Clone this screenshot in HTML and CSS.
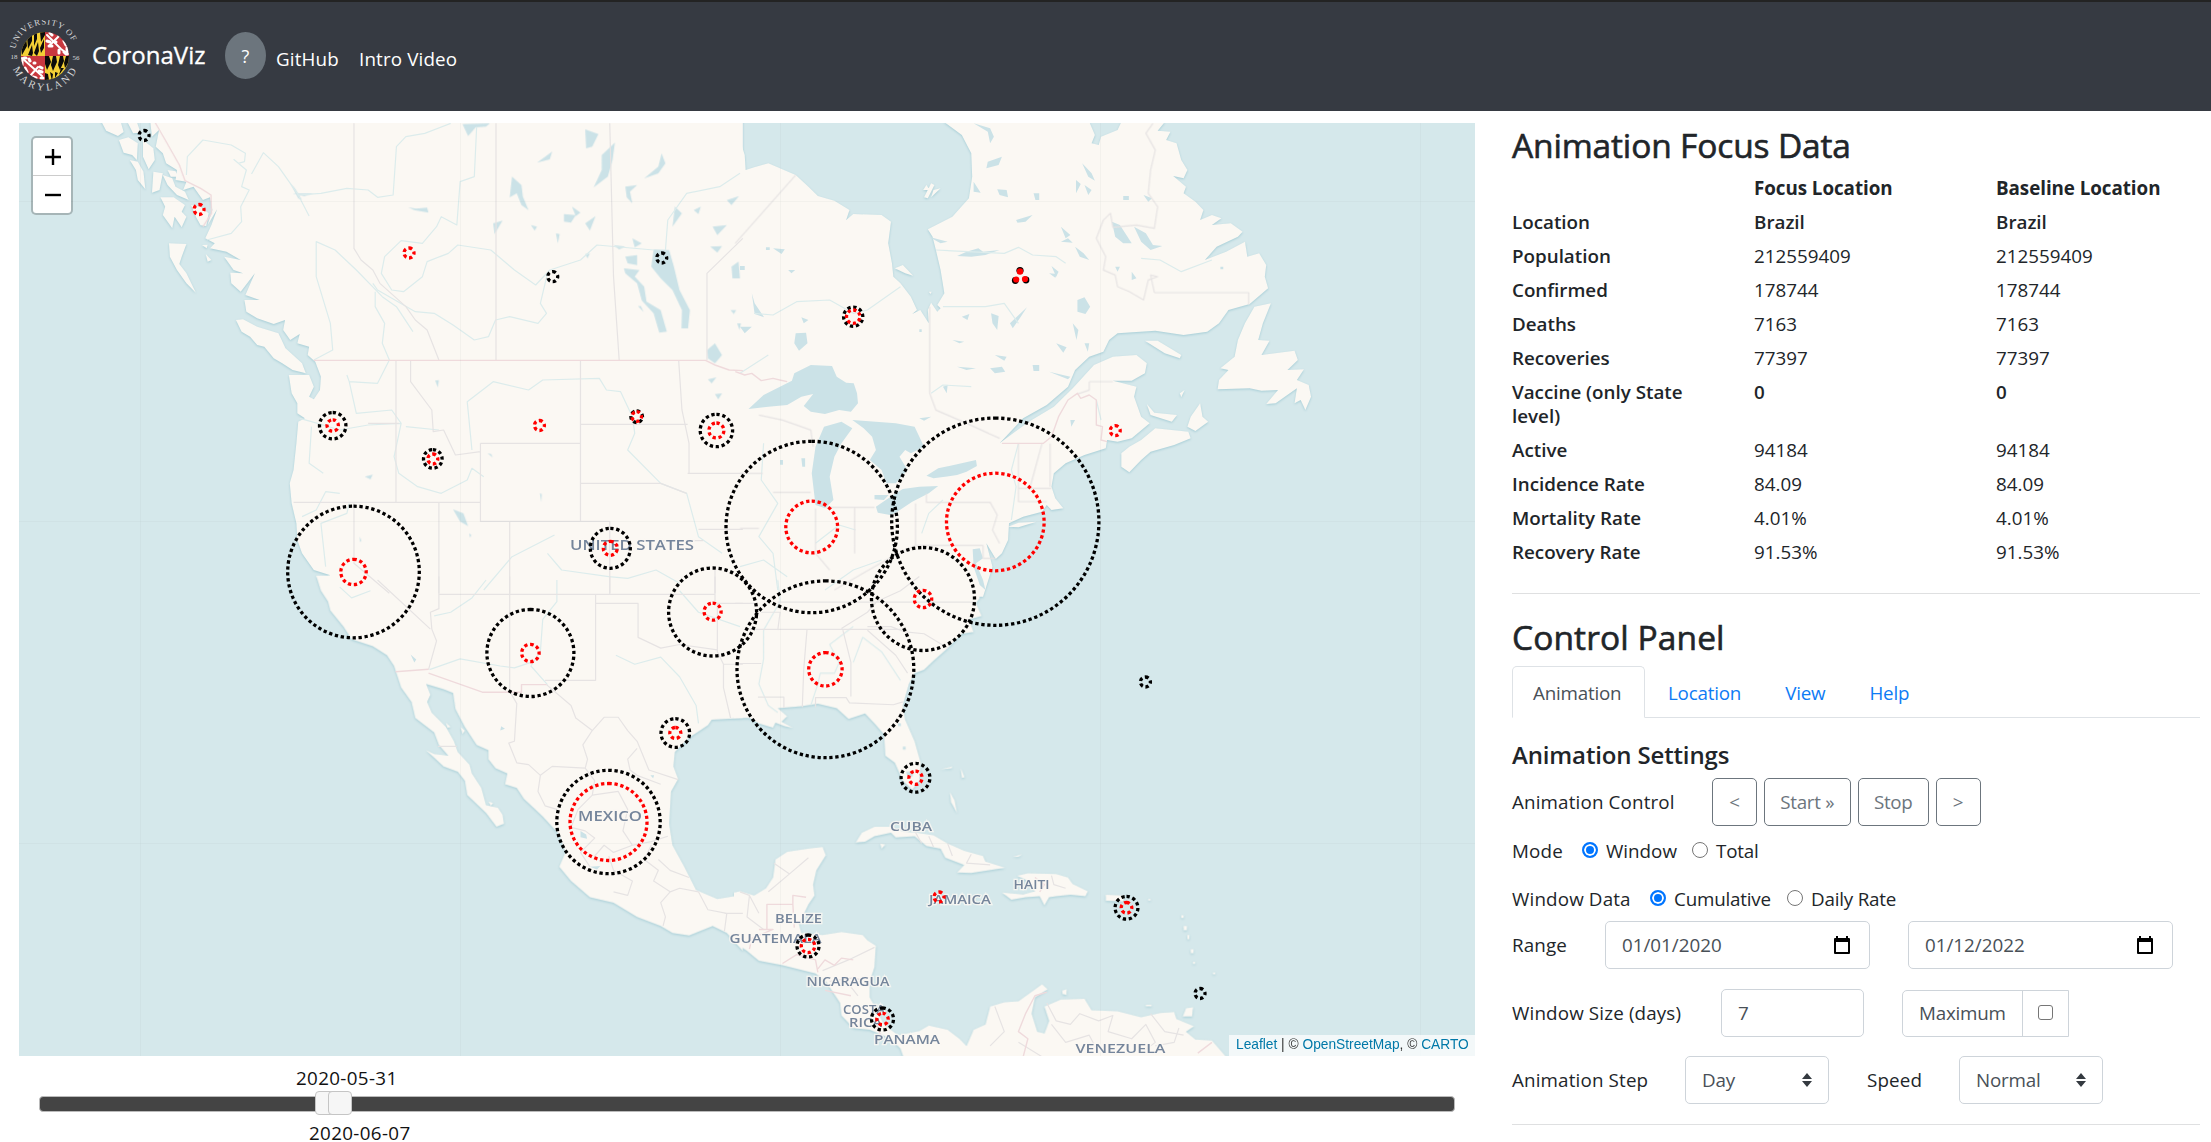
FILE: index.html
```html
<!DOCTYPE html>
<html lang="en">
<head>
<meta charset="utf-8">
<title>CoronaViz</title>
<link rel="stylesheet" href="styles.css">
</head>
<body>
<header class="navbar">
  <svg class="logo" viewBox="0 0 72 72" width="72" height="72">
    <defs>
      <clipPath id="globe"><circle cx="36" cy="36" r="24"/></clipPath>
      <path id="arc-top" d="M6.500,29 A30,30 0 0 1 65.500,29"/>
      <path id="arc-bottom" d="M4,49 A34.5,34.5 0 0 0 68,49"/>
    </defs>
    <g clip-path="url(#globe)">
      <rect x="12" y="12" width="24" height="24" fill="#f3cf35"/>
      <rect x="36" y="12" width="24" height="24" fill="#c8383f"/>
      <rect x="12" y="36" width="24" height="24" fill="#c8383f"/>
      <rect x="36" y="36" width="24" height="24" fill="#f3cf35"/>
      <path fill="#0b0b0b" d="M12,25l5-8 1,9-5,9zM18,16l5-4 0,9-4,8zM25,12l3-1 0,8-3,7zM31,12h5v3l-4,7zM19,35l4-10 1,8-1,3zM25,33l4-11 1,9-2,5zM31,28l4-9v9l-3,5z"/>
      <path fill="#0b0b0b" d="M36,36h4l2,6-4,8-2-6zM44,36h3l1,6-4,9-2-6zM51,36h3l1,5-4,9-2-5zM57,36h4l-1,6-4,6-1-5zM36,53l3,1 1,6h-4zM41,52l3,2-1,7zM46,52l3,1-3,5zM52,48l3,0-5,7z"/>
      <g fill="none" stroke="#fff" stroke-linecap="round">
        <path stroke-width="2" d="M38,15l14,14 7,5M41,25l9-9"/>
        <path stroke-width="3" d="M38,21l3,1M41,13l2,2M40,26h3M49,14l3,2M55,21l2,4M58,28v6M50,30v3M55,32l2,2M46,22l1,0"/>
        <path stroke-width="2" d="M13,38l10,9 10,9M21,56l8-9"/>
        <path stroke-width="3" d="M13,39v6M16,48l2,4M20,39l1,2M15,38h2M25,43h1M31,47l2,1M30,51l3,1M24,57l3,1M32,58h2"/>
      </g>
    </g>
    <g class="logo-text">
      <text><textPath href="#arc-top" textLength="75">UNIVERSITY OF</textPath></text>
      <text class="logo-state"><textPath href="#arc-bottom" textLength="80">MARYLAND</textPath></text>
      <text x="1.500" y="39" class="logo-year">18</text>
      <text x="63.500" y="40" class="logo-year">56</text>
    </g>
  </svg>
  <span class="brand">CoronaViz</span>
  <button class="help-button">?</button>
  <a class="nav-link">GitHub</a>
  <a class="nav-link nav-video">Intro Video</a>
</header>

<main class="page">
<section class="map-column">
<div class="map">
<svg class="map-canvas" viewBox="19 123 1456 933" width="1456" height="933">
  <g class="land">
    <g transform="translate(0 110) scale(.47194 .33333)">
      <path d="M318,30L322,80 337,60 330,110 345,130 352,160 375,180 372,210 395,215 388,240 410,230 430,270 445,262 450,300 440,345 460,298 448,345 435,385 455,400 445,415 480,425 510,450 475,440 495,480 515,490 488,488 490,520 510,545 540,490 520,555 550,570 518,570 522,605 545,625 580,642 604,630 600,660 615,690 635,672 630,700 655,710 652,735 668,755 680,800 678,840 665,868 655,860 665,830 655,795 612,795 618,850 630,880 630,910 646,925 632,935 628,1000 622,1080 614,1120 618,1180 628,1240 630,1290 640,1330 665,1380 700,1396 682,1402 690,1450H1574V30Z"/>
      <path d="M500,630L515,628 545,650 590,670 605,715 640,760 648,790 620,780 598,760 580,745 560,710 545,705 530,680 512,665ZM358,400L395,402 385,440 380,462 395,490 415,548 395,520 375,480 360,440ZM213,30L225,62 250,78 262,66 256,36ZM270,36L282,70 298,68 290,36ZM252,90L272,82 292,100 290,150 280,135 262,128ZM275,150L292,155 304,185 308,238 292,210 288,180ZM303,90L325,115 328,150 315,178 303,140ZM325,185L345,190 338,240 322,248ZM345,195L365,205 372,230 392,245 400,270 375,255 355,225ZM340,262L368,262 392,285 385,305 395,320 385,352 370,320 365,355 345,315 350,290ZM405,285L425,290 442,310 437,348 425,346 415,320ZM355,180L372,184 378,200 362,200ZM428,405L440,404 438,415ZM436,432L448,450 440,455Z"/>
    </g>
    <g transform="translate(740 110) scale(.47194 .33333)">
      <path d="M-12,30H-6L0,90 10,135 12,180 30,172 60,160 118,195 145,230 165,258 200,272 232,300 225,330 240,312 300,315 320,335 314,400 322,460 325,500 340,520 362,560 375,600 365,612 382,600 400,640 398,600 405,578 418,605 425,595 418,585 433,550 425,480 415,420 408,380 398,358 450,320 485,265 492,200 490,130 470,75 432,35H740L752,75 745,100 760,105 765,80 800,60 808,36H900L885,62 912,65 903,90 925,100 935,150 948,180 940,205 918,198 945,230 940,250 965,275 982,300 975,330 1000,315 1020,325 1000,345 1040,340 1065,365 1055,380 1010,410 985,450 1030,425 1070,395 1075,440 1100,430 1115,465 1112,500 1119,535 1080,582 1035,600 1015,640 990,665 940,675 880,662 800,670 782,690 770,725 740,740 710,780 695,830 650,885 600,925 550,1000 580,968 612,935 665,890 705,835 750,765 790,740 840,735 862,760 858,790 830,812 790,812 840,830 835,860 850,920 868,940 830,985 800,995 778,990 775,1015 730,1035 690,1060 665,1090 660,1130 668,1165 685,1195 660,1200 650,1185 640,1205 600,1220 570,1240 568,1290 555,1330 542,1347 522,1300 535,1370 515,1460H-12Z"/>
      <path d="M1090,590L1125,580 1108,640 1098,690 1122,692 1105,735 1175,722 1182,750 1160,780 1195,778 1180,810 1205,825 1210,860 1198,900 1188,870 1175,880 1180,835 1135,880 1115,882 1140,840 1105,842 1080,835 1012,838 1015,810 1035,780 1018,775 1048,740 1055,690 1070,640ZM858,692L885,692 935,735 932,745 900,730ZM850,990L880,955 950,965 955,985 920,1005 870,1025 850,1050 825,1087 808,1070 808,1030 825,1010ZM975,880L980,920 992,935 965,963 948,950 955,920ZM862,882L878,908 926,915 915,935 870,915ZM328,475L345,465 367,497 350,490ZM405,220L412,225 398,265 390,262ZM568,1250L590,1238 628,1235 590,1252ZM400,545L406,545 404,552ZM395,225L402,240 388,240ZM410,240L425,235 405,262ZM932,850L942,840 935,862Z"/>
    </g>
    <g transform="translate(0 580) scale(.47194 .35842)">
      <path d="M670,-12L680,30 695,60 700,85 728,130 745,165 790,185 820,210 835,240 850,300 872,340 880,385 920,425 930,460 950,490 920,485 903,475 940,520 970,535 985,560 990,600 1030,650 1052,688 1068,680 1065,655 1055,635 1030,628 1020,580 1000,540 995,515 970,480 962,450 945,410 915,370 905,340 912,320 903,290 940,305 960,315 965,360 985,410 1010,460 1035,475 1035,500 1050,525 1075,540 1070,570 1095,580 1110,610 1150,660 1185,710 1198,760 1185,800 1210,840 1250,885 1300,900 1350,940 1400,965 1425,985 1460,992 1510,965 1540,985 1574,1035V878L1520,890 1475,865 1450,800 1425,740 1418,680 1422,590 1437,555 1427,520 1430,480 1460,440 1500,405 1508,390 1574,385V-12Z"/>
      <path d="M976,410L985,420 980,430ZM1035,618L1045,622 1040,630ZM945,398L955,410 948,412Z"/>
    </g>
    <g transform="translate(740 580) scale(.47194 .35842)">
      <path d="M-12,-12H516L500,20 508,50 500,65 512,100 485,110 495,145 470,150 440,190 410,225 390,250 370,260 358,290 345,350 350,390 370,450 383,510 380,560 365,585 345,560 328,510 308,490 305,430 285,400 265,372 230,388 205,358 165,345 130,352 80,358 100,380 88,395 112,412 95,408 75,398 70,412 40,400 20,385 -12,385Z"/>
      <path d="M-12,872L0,868 30,880 55,860 70,830 75,780 100,758 150,748 175,745 182,768 162,810 155,850 158,880 145,905 125,960 130,985 175,990 215,982 260,990 270,1005 288,1020 285,1080 275,1120 275,1165 290,1200 305,1240 335,1270 380,1258 400,1243 440,1255 465,1280 480,1300 495,1255 520,1240 530,1190 560,1178 590,1175 640,1128 652,1142 625,1165 618,1210 630,1260 645,1265 655,1230 645,1190 680,1170 730,1168 745,1200 800,1203 850,1220 890,1208 920,1205 925,1225 962,1245 945,1260 965,1282 1000,1285 1040,1345H350L340,1308 320,1280 275,1255 240,1250 215,1215 212,1180 182,1120 160,1098 90,1075 40,1062 15,1035 -12,1010Z"/>
      <path d="M245,732L258,705 285,688 320,688 345,702 375,705 410,712 440,735 475,755 515,770 520,785 562,803 490,817 460,816 475,795 435,775 425,750 395,742 370,715 330,718 320,705 285,715 265,730ZM555,872L600,877 625,868 610,840 587,825 610,818 670,820 695,830 705,848 737,868 732,882 700,878 670,882 655,885 645,908 635,882 605,885 575,892ZM775,878L815,880 812,897 775,895ZM297,735L308,738 300,750ZM425,528L450,520 448,525ZM468,525L476,550 470,552ZM445,592L455,615 460,650 447,620ZM578,772L598,765 590,772ZM945,1195L960,1192 958,1218 938,1218ZM683,1145L692,1142 692,1158 683,1155ZM935,935h5v8h-5zM940,965h7v12h-7zM948,990h4v12h-4zM955,1030h6v11h-6zM960,1065h4v6h-4zM1002,1095h5v5h-5zM860,1185h12v4h-12zM865,890h5v4h-5z"/>
    </g>
  </g>

  <g class="lakes">
    <g transform="translate(0 110) scale(.47194 .33333)">
      <path d="M1385,418L1418,420 1428,470 1440,540 1462,600 1458,655 1444,655 1445,600 1425,540 1400,505 1380,470ZM1322,475L1355,480 1345,500 1365,530 1370,575 1400,600 1413,665 1397,668 1385,610 1360,572 1350,520 1325,490ZM1275,135L1303,98 1298,150 1288,200 1258,232 1275,180ZM1240,58L1268,72 1255,110 1242,115ZM980,42L1038,40 1030,50 1008,52 992,78ZM1138,158L1170,125 1165,148ZM1085,200L1105,225 1108,260 1120,300 1105,285 1095,250 1080,262ZM1365,205L1395,170 1402,130 1410,160 1395,190ZM865,292L882,296 905,293 908,308 890,303 878,300ZM1498,720L1515,700 1530,735 1515,760 1500,745ZM960,1198L982,1210 992,1248 975,1235ZM1195,312L1220,315 1210,338 1195,335ZM1125,345L1138,350 1133,362ZM1045,340L1065,332 1048,372ZM1325,230L1350,225 1335,245 1340,280 1328,262ZM1212,290L1230,308 1220,318ZM1240,340L1262,318 1250,362ZM1178,370L1186,372 1182,400ZM1470,300L1485,290 1480,312ZM1510,350L1540,345 1520,375ZM1505,410L1530,408 1520,428ZM1550,470L1565,455 1568,505 1552,505ZM1540,270L1566,258 1550,285ZM1340,385L1360,400 1345,412ZM1325,440L1350,435 1350,465 1330,460ZM1300,405L1325,410 1312,418ZM1240,432L1250,430 1245,445ZM1430,290L1445,310 1425,350ZM922,812L930,810 928,832ZM773,1100L790,1094 785,1108ZM1500,808L1518,802 1508,820ZM1515,852L1530,850 1522,868ZM1548,600h12l-5,12zM1562,640h8l-3,20zM1352,588l6,0 6,18zM1033,1030l8,2 3,10zM1144,1150l4,2-1,25zM762,1280l4,12-3,5zM994,1270l5,5-3,8zM620,250l45,0-20,8zM615,220l10,15 15,35-8-5z"/>
    </g>
    <g transform="translate(740 110) scale(.47194 .33333)">
      <path d="M18,897L50,855 110,812 115,790 150,765 195,768 205,800 225,818 241,820 248,850 250,880 235,905 210,900 180,912 150,905 135,888 155,852 130,860 100,885 60,890ZM160,1010L178,950 215,935 238,955 215,1000 200,1040 190,1100 198,1170 180,1195 160,1185 152,1090ZM238,930L330,940 370,950 380,980 390,1010 362,1030 350,1020 338,1040 355,1080 330,1120 310,1120 300,1080 275,1050 288,1020 280,980 262,955ZM288,1190L330,1150 345,1137 380,1130 420,1128 400,1150 365,1175 330,1208 318,1215 292,1208ZM395,1097L420,1075 500,1050 502,1068 480,1085 460,1095 410,1105ZM493,1318L508,1315 515,1345 500,1360 515,1410 520,1440 508,1425 495,1370ZM285,1155L315,1155 305,1170 285,1168Z"/>
      <path d="M495,40L530,55 538,80 530,100 525,65ZM525,155L555,140 548,165 522,175ZM725,160L745,190 752,212 738,200ZM712,210L722,222 712,250ZM730,225L745,240 738,255ZM545,238L565,240 568,262 550,255ZM495,215L510,248 495,245ZM622,250h12v20h-8zM585,330L620,315 605,335 588,338ZM480,425L505,415 515,425 550,420 520,435 490,440 460,438ZM680,350L700,375 690,385ZM710,410L728,430 740,450 720,440ZM680,395L695,385 705,398ZM788,335L805,345 830,400 812,400 795,380ZM835,350L860,370 875,405 895,408 870,420 850,395ZM572,640L608,592 595,620 578,655ZM715,570L730,562 742,590 732,612 715,605ZM450,690L475,695 465,700ZM470,620L486,612 482,630ZM532,610L548,618 545,660 535,640ZM660,468L675,485 670,500ZM655,490L672,492 668,503ZM540,735L565,740 560,752ZM670,700L692,712 685,728ZM620,765h14v18h-12zM530,775L555,770 562,785 540,790ZM118,670L140,668 143,700 125,722 115,700ZM70,415L95,418 88,432ZM55,412h8v8h-8zM102,480l15,0-8,10zM0,468h10v12h-10zM0,650h25l-15,20zM25,550l6,30 20,42-20-10zM130,622l15,8-10,10zM380,925L405,920 390,932ZM380,658h5v8h-5zM460,770L500,775 480,780ZM430,830L440,825 438,850ZM400,380L440,395 425,400ZM795,470l10,0-5,15zM830,485l10,20-10,5zM730,700h10l-3,25zM705,640l12,20-4,30zM812,258h12v12h-12zM855,255l18,10-8,10zM1018,470h6v8h-6zM130,1045h8v25h-6zM85,1050h6v14h-6zM700,930l10,0-8,20zM655,785l45,15-5,8z"/>
    </g>
    <g transform="translate(0 580) scale(.47194 .35842)">
      <path d="M870,208L882,222 878,230ZM1062,408L1070,415 1060,420ZM1250,800L1272,798 1265,808ZM1230,700l12,10 2,12-14-4zM1378,545l8,0-2,8z"/>
    </g>
    <g transform="translate(740 580) scale(.47194 .35842)">
      <path d="M335,400h6v8h-6zM345,465h6v8h-6zM352,535L368,535 365,550 355,548Z"/>
    </g>
  </g>

  <g class="rivers">
    <g transform="translate(0 110) scale(.47194 .33333)">
      <path d="M395,195L397,140 430,90 490,105 520,130 518,155 505,160M495,148L522,180 512,230 528,240 510,290 512,335 490,370 438,390M533,192L558,128 590,170 630,250 655,318M630,255L680,250 735,235 780,240 800,262 833,255 840,110 860,80 900,70 955,40M1010,50L1005,200 975,215 968,345 935,320 925,350 895,400 850,392 815,440 808,490 830,540 855,545 895,500 905,455 950,430 970,405 1040,420 1090,480 1135,525 1165,480 1230,450 1265,405 1385,420M1160,490L1145,580 1158,610 1140,640 1080,620 1050,630 1035,680 1005,690 960,645 920,610 880,605 800,540 790,520M665,750L705,720 700,640 670,500 670,395 710,420 755,480 810,560 840,590 875,665M795,545L795,590 815,640 810,700 825,750 800,820 740,815 735,795M1410,420L1415,330 1455,250 1525,230 1568,190M740,815L755,910 830,900 850,940 780,945 720,960 660,935 635,925M850,940L835,1040 845,1090 885,1130 935,1150 990,1110 1000,1075 1025,1100M1000,1020L990,875 1045,815 1120,840 1150,810 1270,805 1285,840 1315,845 1340,920 1345,970 1330,1020 1400,1120 1455,1150 1480,1280 1530,1330M860,950L930,960 M640,1220L670,1200 690,1145 720,1150M740,1180L735,1210 680,1240 690,1370M660,950L655,1060 685,1090M1025,1440L1085,1340 1175,1275M1160,1330L1190,1380 1290,1400 1330,1405 1390,1380 1440,1420"/>
    </g>
    <g transform="translate(740 110) scale(.47194 .33333)">
      <path d="M415,420L560,430 590,412 620,435 670,440 690,460M30,610L70,615 120,575 190,570 240,610 270,600 340,530M430,590L520,590 560,580 590,640M850,445L890,450 935,485 1000,450M0,790L60,735M50,1000L45,1110 80,1180 40,1280 70,1330 80,1440M160,1300L210,1245 245,1260M385,1270L400,1210 430,1170M590,1000L575,1080 585,1130 575,1230M0,1370L50,1350 100,1400M405,850L430,825 490,830M755,870L765,930M180,1440L240,1380 300,1350"/>
    </g>
    <g transform="translate(0 580) scale(.47194 .35842)">
      <path d="M1180,0L1180,60 1150,110 1145,200 1125,240 1160,292M1030,0L1000,50 955,90 920,100M910,250L975,220 1060,240 1090,245 1125,230M1305,210L1345,235 1400,215 1440,270 1475,350 1480,400M1440,30L1480,90 1568,130M720,20L745,50 785,30"/>
    </g>
    <g transform="translate(740 580) scale(.47194 .35842)">
      <path d="M80,0L85,60 50,140 50,220 40,290 60,350 80,370M150,350L165,290 170,260 200,260 210,230 190,180 240,130M240,230L260,160 300,200 340,280"/>
    </g>
  </g>

  <g class="borders">
    <g transform="translate(0 110) scale(.47194 .33333)">
      <path d="M750,40V415L765,450 790,480 805,520 860,590 880,630 905,660 930,750M1051,40V750M1292,40L1300,500 1312,750M1498,750V490L1574,385M839,750V1177M870,750V815L915,900 918,965 940,960 965,1035 1018,1025M1018,1000V1234H1292M1018,1000H1230M1230,750V1234M1230,943H1457M1438,750L1445,900 1460,1000V1090M1457,1090H1574M1230,1120H1400L1455,1150M1480,1258H1574M622,1177H1018M930,1177V1450M1080,1234V1450M1292,1234V1450M750,1180V1360L825,1450M780,940H845M1515,1380V1450M1490,1292H1400"/>
    </g>
    <g transform="translate(740 110) scale(.47194 .33333)">
      <path d="M118,195L-10,400M402,590V850L415,900 480,940 550,985M878,548H1078V585M875,40L860,70 880,120 870,180 865,250 885,290 878,355 840,345 790,352 785,310 770,330 755,385 775,440 770,480 795,495 800,530 825,545 855,570 865,510 885,500 870,495 878,548M395,1150V1177H530L545,1215 535,1260 550,1300M372,1180V1306H515M243,1190V1330M160,1195V1330L190,1380M70,1147H150M180,1192H285M657,1000V1130M640,1000L615,1130M590,1000V1175H650M590,1135H660M0,1255H40M40,915L90,930 150,960 155,1010M740,815H790M740,815V840L715,852M0,1090H48M200,1440L260,1390 310,1350 372,1306M515,1306V1345H540"/>
    </g>
    <g transform="translate(0 580) scale(.47194 .35842)">
      <path d="M930,-10V80L912,90 915,137 925,170 908,250M930,40H1515M1080,-10V310M1292,-10V40M1262,40V280H1155M1262,65H1352V160L1400,190 1440,180 1520,195M1515,-10V65H1574M1520,65V200L1533,235V300L1548,385M1533,235H1574M800,0L912,137M1158,292L1210,350 1220,385 1255,420 1280,383 1310,383 1330,420 1350,450 1375,530 1437,557M928,464H968M1082,315L1095,345 1090,450 1078,455 1095,510 1120,515 1145,545 1170,520 1240,525 1245,500 1235,460 1255,420M1145,545L1140,590 1155,630 1180,640M1350,470L1330,500 1335,530 1350,545 1400,570M1240,525L1260,560 1255,600 1225,640 1210,690 1240,700 1260,720 1230,760 1250,800M1255,600L1310,590 1330,640 1320,700 1340,740 1300,760 1280,740 1260,770M1340,740L1380,730 1415,715M1380,740L1365,780 1395,810 1385,840 1420,870 1400,900 1410,940 1405,965M1395,780L1420,810 1460,830M1300,870L1330,880 1340,840 1300,810 1290,770M1420,870L1440,860 1480,870 1500,920 1540,930 1535,980M1535,930H1574"/>
    </g>
    <g transform="translate(740 580) scale(.47194 .35842)">
      <path d="M-10,65H30M80,62H500M20,138H340M80,140L85,90H45M142,138L135,250 132,355M218,140L235,230V325M160,355V328H225L232,343 325,348 345,340M38,327H93V357M-10,233H45M270,130L320,130 350,145 390,150 440,190M270,140L330,210 355,260M215,135L270,90 290,60 340,30 380,-10M72,790L105,820 145,775M105,820L60,870M0,870L20,880 40,930M20,880L15,940 50,975M175,1090L230,1060 285,1025M190,1120L240,1110 270,1120M220,1110L250,1160M370,700L385,735M400,715L410,745M440,735L450,770M490,765L480,790 530,795M660,825L665,850 690,860M650,1180L670,1230 700,1240 720,1210 760,1230 790,1215 780,1260 830,1280 860,1240 880,1290 850,1320M870,1210L900,1260 940,1270M540,1190L560,1260 530,1300M660,1240L690,1290 740,1270 760,1320M590,1290L640,1330 M930,1250L920,1290 880,1300"/>
    </g>
  </g>

  <g class="nations">
    <g transform="translate(0 110) scale(.47194 .33333)">
      <path d="M328,36L350,90 380,165 385,185 392,212 425,235 447,255 448,310 430,350M665,751H1495L1515,765 1545,780 1574,782"/>
    </g>
    <g transform="translate(740 110) scale(.47194 .33333)">
      <path d="M-10,785L10,795 25,790 45,812 70,805 100,815M555,1000H643L660,980 675,920 695,870 715,850 722,865 740,855 755,870V945L768,950 765,990 778,995"/>
    </g>
    <g transform="translate(0 580) scale(.47194 .35842)">
      <path d="M838,256L908,249M908,260L1022,313H1105V292H1158"/>
    </g>
    <g transform="translate(740 580) scale(.47194 .35842)">
      <path d="M20,1030L25,1000 70,975 40,975M57,975V905H112V880L140,885M112,905L115,970M90,1070L120,1045 160,1060 165,1095M165,1085L180,1060 200,1075 215,1055 240,1060M635,870L645,850 625,830M600,1330L610,1280 590,1260 605,1210 625,1160 650,1150M180,1145L235,1160M290,1240L300,1280M970,1320L1000,1290"/>
    </g>
  </g>

  <path class="graticule" d="M140.500,123V1056M460.500,123V1056M780.500,123V1056M1100.500,123V1056M1420.500,123V1056M19,201.500H1475M19,521.500H1475M19,843.500H1475"/>

  <g class="labels">
    <text x="570" y="550" textLength="124" lengthAdjust="spacingAndGlyphs">UNITED STATES</text>
    <text x="578" y="821" textLength="64" lengthAdjust="spacingAndGlyphs">MEXICO</text>
    <g class="labels-small">
      <text x="890" y="831" textLength="42" lengthAdjust="spacingAndGlyphs">CUBA</text>
      <text x="1013.500" y="889" textLength="36" lengthAdjust="spacingAndGlyphs">HAITI</text>
      <text x="929" y="904" textLength="62" lengthAdjust="spacingAndGlyphs">JAMAICA</text>
      <text x="775" y="923" textLength="47" lengthAdjust="spacingAndGlyphs">BELIZE</text>
      <text x="729.500" y="943" textLength="92" lengthAdjust="spacingAndGlyphs">GUATEMALA</text>
      <text x="806.500" y="986" textLength="83" lengthAdjust="spacingAndGlyphs">NICARAGUA</text>
      <text x="843" y="1013.500" textLength="42" lengthAdjust="spacingAndGlyphs">COSTA</text>
      <text x="849" y="1026.500" textLength="33" lengthAdjust="spacingAndGlyphs">RICA</text>
      <text x="874" y="1044" textLength="66" lengthAdjust="spacingAndGlyphs">PANAMA</text>
      <text x="1075.500" y="1053" textLength="90" lengthAdjust="spacingAndGlyphs">VENEZUELA</text>
    </g>
  </g>

  <g class="rings">
    <circle cx="144" cy="135.500" r="5"/>
    <circle cx="552.700" cy="276.700" r="5"/>
    <circle cx="661.700" cy="258" r="5"/>
    <circle cx="332.700" cy="425.700" r="13.200"/>
    <circle cx="432.800" cy="458.900" r="9.300"/>
    <circle cx="636.700" cy="416.700" r="5.800"/>
    <circle cx="716.400" cy="430.500" r="16.200"/>
    <circle cx="610.300" cy="548.300" r="20"/>
    <circle cx="353.500" cy="572" r="65.800"/>
    <circle cx="853.200" cy="316.700" r="9.600"/>
    <circle cx="811.700" cy="527" r="85.700"/>
    <circle cx="995.300" cy="521.700" r="103.600"/>
    <circle cx="923" cy="599" r="51.500"/>
    <circle cx="825.400" cy="669.300" r="88.400"/>
    <circle cx="712.600" cy="612" r="44"/>
    <circle cx="530.400" cy="653" r="43.500"/>
    <circle cx="675.300" cy="733" r="14.300"/>
    <circle cx="608.500" cy="822" r="51.700"/>
    <circle cx="915.500" cy="777.800" r="14.400"/>
    <circle cx="1145.400" cy="682" r="5"/>
    <circle cx="1126.500" cy="907.800" r="11.400"/>
    <circle cx="808" cy="946" r="11"/>
    <circle cx="882.500" cy="1019" r="11"/>
    <circle cx="1200" cy="993.500" r="5"/>
  </g>
  <g class="rings rings-deaths">
    <circle cx="199" cy="209.500" r="5"/>
    <circle cx="409" cy="253" r="5"/>
    <circle cx="332.700" cy="425.500" r="5.700"/>
    <circle cx="432.800" cy="459" r="5"/>
    <circle cx="539.400" cy="425.500" r="5"/>
    <circle cx="636.700" cy="416.500" r="4.800"/>
    <circle cx="716.400" cy="430.500" r="7.500"/>
    <circle cx="610.300" cy="548.300" r="7"/>
    <circle cx="353.500" cy="572" r="12.700"/>
    <circle cx="853.200" cy="316.700" r="6.700"/>
    <circle cx="1115.200" cy="430.700" r="5"/>
    <circle cx="811.700" cy="527" r="25.900"/>
    <circle cx="995.300" cy="522" r="48.800"/>
    <circle cx="923" cy="599" r="8.700"/>
    <circle cx="825.400" cy="669.300" r="16.700"/>
    <circle cx="712.600" cy="611.700" r="8.500"/>
    <circle cx="530.400" cy="653" r="8.700"/>
    <circle cx="675.300" cy="733" r="5.500"/>
    <circle cx="608.500" cy="822" r="38.500"/>
    <circle cx="915.500" cy="777.800" r="6.600"/>
    <circle cx="939" cy="897" r="5"/>
    <circle cx="1126.500" cy="907.800" r="5.300"/>
    <circle cx="808" cy="946" r="6.700"/>
    <circle cx="882.500" cy="1019" r="5.700"/>
  </g>
  <g><circle cx="1020" cy="270.500" r="3.600"/><circle cx="1015.300" cy="280.500" r="3.400"/><circle cx="1026" cy="280" r="3.400"/></g>
  <g fill="#f00"><circle cx="1020" cy="271.500" r="3.200"/><circle cx="1016.200" cy="279.500" r="3.100"/><circle cx="1025" cy="279" r="3.100"/></g>
</svg>
<div class="zoom-control"><a><svg width="16" height="16" viewBox="0 0 16 16"><path d="M0 8H16M8 0V16"/></svg></a><a><svg width="16" height="16" viewBox="0 0 16 16"><path d="M0 8H16"/></svg></a></div>
<div class="attribution"><a>Leaflet</a> | © <a>OpenStreetMap</a>, © <a>CARTO</a></div>
</div>
<div class="timeline">
  <span class="date date-from">2020-05-31</span>
  <div class="track"><i class="handle handle-from"></i><i class="handle handle-to"></i></div>
  <span class="date date-to">2020-06-07</span>
</div>
</section>

<section class="side">
  <h2 class="title title-focus">Animation Focus Data</h2>
  <div class="focus-table">
    <span></span><b>Focus Location</b><b>Baseline Location</b>
    <span class="key">Location</span><span class="key">Brazil</span><span class="key">Brazil</span>
    <span class="key">Population</span><span>212559409</span><span>212559409</span>
    <span class="key">Confirmed</span><span>178744</span><span>178744</span>
    <span class="key">Deaths</span><span>7163</span><span>7163</span>
    <span class="key">Recoveries</span><span>77397</span><span>77397</span>
    <span class="key">Vaccine (only State<br>level)</span><span class="key">0</span><span class="key">0</span>
    <span class="key">Active</span><span>94184</span><span>94184</span>
    <span class="key">Incidence Rate</span><span>84.09</span><span>84.09</span>
    <span class="key">Mortality Rate</span><span>4.01%</span><span>4.01%</span>
    <span class="key">Recovery Rate</span><span>91.53%</span><span>91.53%</span>
  </div>
  <hr class="rule">
  <h2 class="title title-panel">Control Panel</h2>
  <nav class="tabs"><a class="tab tab-active">Animation</a><a class="tab">Location</a><a class="tab">View</a><a class="tab">Help</a></nav>
  <h4 class="subtitle">Animation Settings</h4>
  <div class="row row-control">
    <span class="label w-control">Animation Control</span>
    <button class="btn btn-step">&lt;</button><button class="btn btn-start">Start »</button><button class="btn btn-stop">Stop</button><button class="btn btn-step">&gt;</button>
  </div>
  <div class="row row-mode">
    <span class="label w-mode">Mode</span><i class="radio on"></i><span class="w-window">Window</span><i class="radio"></i><span>Total</span>
  </div>
  <div class="row row-data">
    <span class="label w-data">Window Data</span><i class="radio on"></i><span class="w-cumulative">Cumulative</span><i class="radio"></i><span>Daily Rate</span>
  </div>
  <div class="row row-range">
    <span class="label w-range">Range</span>
    <div class="field date-field">01/01/2020<svg width="16" height="18" viewBox="0 0 16 18"><path d="M2 0h2v2h8V0h2v2h1a1 1 0 0 1 1 1v14a1 1 0 0 1-1 1H1a1 1 0 0 1-1-1V3a1 1 0 0 1 1-1h1zM2 6v10h12V6z" fill-rule="evenodd"/></svg></div>
    <div class="field date-field date-end">01/12/2022<svg width="16" height="18" viewBox="0 0 16 18"><path d="M2 0h2v2h8V0h2v2h1a1 1 0 0 1 1 1v14a1 1 0 0 1-1 1H1a1 1 0 0 1-1-1V3a1 1 0 0 1 1-1h1zM2 6v10h12V6z" fill-rule="evenodd"/></svg></div>
  </div>
  <div class="row row-size">
    <span class="label w-size">Window Size (days)</span>
    <div class="field size-field">7</div>
    <div class="group"><span class="group-text">Maximum</span><span class="group-check"><i class="checkbox"></i></span></div>
  </div>
  <div class="row row-step">
    <span class="label w-step">Animation Step</span>
    <div class="field select">Day<svg width="10" height="14" viewBox="0 0 10 14"><path d="M5 0l5 6H0zM5 14L0 8h10z"/></svg></div>
    <span class="label w-speed">Speed</span>
    <div class="field select">Normal<svg width="10" height="14" viewBox="0 0 10 14"><path d="M5 0l5 6H0zM5 14L0 8h10z"/></svg></div>
  </div>
  <hr class="rule rule-end">
</section>
</main>
</body>
</html>
```
FILE: styles.css
```css
* { box-sizing: border-box; }
body {
  margin: 0;
  width: 2211px;
  height: 1142px;
  overflow: hidden;
  background: #fff;
  color: #212529;
  font: 18.8px/24px "Open Sans", "Noto Sans", sans-serif;
}
.navbar {
  display: flex;
  align-items: flex-start;
  height: 111px;
  background: #363a42;
  border-top: 2px solid #232323;
  color: #fff;
}
.logo { margin: 18px 0 0 9px; flex: none; }
.logo-text { fill: #d6d8da; font: 8.6px "Liberation Serif", serif; }
.logo-state { font-size: 10.5px; }
.logo-year { font-size: 7px; }
.brand { width: 133px; margin: 35px 0 0 11px; font-size: 24px; line-height: 36px; -webkit-text-stroke: .3px; }
.help-button {
  width: 41px;
  height: 47px;
  margin-top: 30px;
  padding: 0;
  border: 0;
  border-radius: 50%;
  background: #6c757d;
  color: #fff;
  font: 18px "Open Sans", sans-serif;
}
.nav-link { width: 62px; margin: 44px 0 0 10px; line-height: 26px; letter-spacing: .15px; white-space: nowrap; }
.nav-video { width: auto; margin-left: 21px; }

.page { display: flex; }
.map-column { width: 1456px; margin: 12px 37px 0 19px; flex: none; }
.map { position: relative; height: 933px; background: #d5e8eb; overflow: hidden; }
.map-canvas { display: block; }
.land { fill: #fbf8f3; filter: drop-shadow(0 1px 1.2px #a6cdd6); }
.lakes { fill: #cbe2e7; }
.rivers, .borders, .nations, .graticule { fill: none; }
.rivers path, .borders path, .nations path { vector-effect: non-scaling-stroke; stroke-linejoin: round; }
.rivers { stroke: #dcecec; stroke-width: 1.2; }
.borders { stroke: #e6e3e3; stroke-width: 1.2; }
.nations { stroke: #efdadc; stroke-width: 1.4; }
.graticule { stroke: #8899a0; stroke-opacity: .07; }
.labels { fill: #75859b; stroke: #fbf8f3; stroke-width: 2.5; stroke-opacity: .8; paint-order: stroke; font: 600 14px "Open Sans", sans-serif; }
.labels-small { font-size: 13px; }
.rings circle {
  fill: none;
  stroke: #000;
  stroke-width: 3.3;
  stroke-dasharray: 3.3 2.7;
  transform: rotate(-90deg);
  transform-box: fill-box;
  transform-origin: center;
}
.rings-deaths circle { stroke: #f00; }
.zoom-control {
  position: absolute;
  left: 12px;
  top: 13px;
  width: 42px;
  height: 79px;
  border: 2px solid rgba(0,0,0,.22);
  border-radius: 5px;
  background: #fff;
  background-clip: padding-box;
}
.zoom-control a {
  display: flex;
  align-items: center;
  justify-content: center;
  height: 37px;
  padding: 1px 0 0 2px;
}
.zoom-control a + a { height: 38px; border-top: 1px solid #ccc; }
.zoom-control svg { stroke: #000; stroke-width: 2.4; }
.attribution {
  position: absolute;
  right: 0;
  bottom: 0;
  width: 246px;
  height: 21px;
  padding-left: 7px;
  background: rgba(255,255,255,.7);
  color: #333;
  font: 13.75px/19px "Liberation Sans", sans-serif;
  white-space: nowrap;
}
.attribution a { color: #0078a8; }

.timeline { display: flex; flex-direction: column; align-items: flex-start; padding: 10px 20px 0 20px; }
.date { color: #111; letter-spacing: .35px; }
.date-from { margin-left: 257px; }
.date-to { margin-left: 270px; margin-top: 9px; }
.track {
  position: relative;
  align-self: stretch;
  height: 16px;
  margin-top: 6px;
  background: #444;
  border: 1px solid #bbb;
  border-radius: 4px;
}
.handle {
  position: absolute;
  top: -6px;
  width: 24px;
  height: 24px;
  background: #f6f6f6;
  border: 1px solid #c5c5c5;
  border-radius: 4px;
}
.handle-from { left: 275px; }
.handle-to { left: 288px; }

.side { width: 688px; flex: none; }
.title { margin: 0; font-weight: 400; font-size: 33.5px; line-height: 42px; white-space: nowrap; -webkit-text-stroke: .6px; }
.title-focus { padding-top: 13px; letter-spacing: -.15px; }
.focus-table {
  display: grid;
  grid-template-columns: 242px 242px 204px;
  grid-template-rows: repeat(6, 34px) 58px repeat(4, 34px);
  margin-top: 5px;
  padding-top: 4px;
  white-space: nowrap;
}
.focus-table > * { padding-top: 1px; }
.focus-table b { font-weight: 700; letter-spacing: -.05px; }
.key { font-weight: 600; letter-spacing: 0; }
.rule { height: 1px; margin: 20px 0 0; border: 0; background: #dfe0e1; }
.title-panel { padding-top: 22px; letter-spacing: .1px; }
.tabs { display: flex; height: 52px; margin-top: 8px; border-bottom: 1px solid #dee2e6; }
.tab { height: 52px; padding: 14px 21px; border: 1px solid transparent; color: #0d7bf5; letter-spacing: -.2px; }
.tab-active { width: 133px; padding-left: 20px; margin-right: 1px; border-color: #dee2e6; border-bottom-color: #fff; border-radius: 5px 5px 0 0; color: #495057; }
.subtitle { margin: 22px 0 0; font-size: 24px; line-height: 30px; font-weight: 600; letter-spacing: -.15px; }
.row { display: flex; align-items: center; height: 48px; white-space: nowrap; letter-spacing: -.2px; }
.label { flex: none; letter-spacing: .15px; }
.row-control { margin-top: 8px; }
.w-control { width: 200px; }
.btn {
  height: 48px;
  margin-right: 6.500px;
  padding: 0;
  border: 1px solid #6c757d;
  border-radius: 5px;
  background: #fff;
  color: #6c757d;
  font: 18.8px "Open Sans", sans-serif;
  letter-spacing: -.3px;
}
.btn-step { width: 45px; }
.btn-start { width: 87.500px; }
.btn-stop { width: 71.500px; }
.row-mode { height: 24px; margin-top: 13px; }
.row-data { height: 24px; margin-top: 24px; }
.w-mode { width: 70px; }
.w-window { width: 86px; letter-spacing: 0; }
.w-data { width: 138px; }
.w-cumulative { width: 113px; }
.radio { width: 16px; height: 16px; margin-right: 8px; border: 1.500px solid #767676; border-radius: 50%; flex: none; position: relative; top: -1px; }
.radio.on { border: 2px solid #0075ff; background: #0075ff; box-shadow: inset 0 0 0 2px #fff; }
.row-range { margin-top: 10px; }
.w-range { width: 93px; }
.field {
  display: flex;
  align-items: center;
  justify-content: space-between;
  height: 48px;
  padding: 0 16px;
  border: 1px solid #ced4da;
  border-radius: 5px;
  color: #495057;
}
.date-field { width: 265px; padding-right: 19px; letter-spacing: 0; }
.date-end { margin-left: 38px; }
.row-size { margin-top: 20px; }
.w-size { width: 209px; }
.size-field { width: 143px; }
.group { display: flex; width: 167px; height: 47px; margin-left: 38px; border: 1px solid #ced4da; border-radius: 5px 0 0 5px; color: #495057; }
.group-text { width: 120px; padding: 10px 0 0 16px; border-right: 1px solid #ced4da; }
.group-check { padding: 14px 15px; }
.checkbox { display: block; width: 15px; height: 15px; border: 1.500px solid #767676; border-radius: 3px; }
.row-step { margin-top: 19px; }
.w-step { width: 173px; }
.select { width: 144px; }
.select svg { fill: #343a40; }
.w-speed { width: 92px; margin-left: 38px; }
.rule-end { margin-top: 20px; }
```
